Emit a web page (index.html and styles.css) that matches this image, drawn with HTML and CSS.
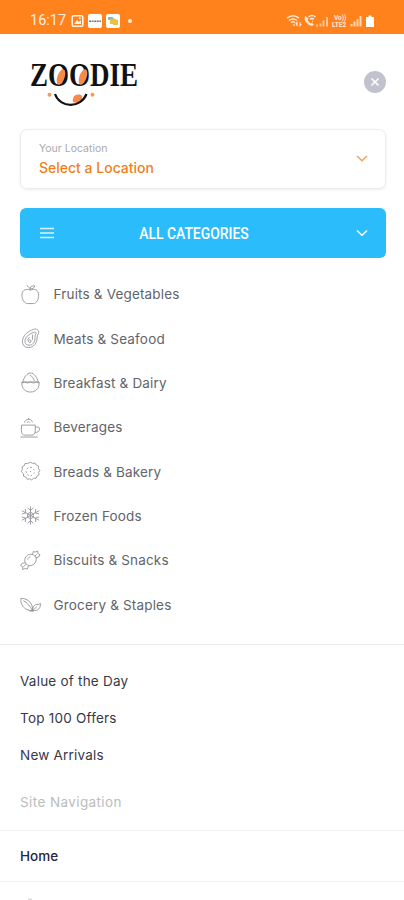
FILE: index.html
```html
<!DOCTYPE html>
<html lang="en">

<head>
    <meta charset="UTF-8">
    <meta name="viewport" content="width=device-width, initial-scale=1">
    <title>Zoodie</title>
    <link rel="stylesheet" href="styles.css">
</head>

<body>
    <div class="statusbar">
        <span class="time">16:17</span>
        <svg class="status-left" width="65" height="16" viewBox="0 0 65 16">
            <rect x="1.2" y="2.7" width="10.6" height="10.6" rx="1.5" fill="none" stroke="#fff3e6" stroke-width="1.6"/>
            <path d="M3 11l3-4 2 2 2-2v4z" fill="#fff3e6"/>
            <circle cx="8.8" cy="5.3" r="1" fill="#fff3e6"/>
            <rect x="17" y="1" width="14" height="14" rx="2" fill="#fff"/>
            <path d="M18 8.2h12" stroke="#777" stroke-width="1.6" stroke-dasharray="2 .6"/>
            <rect x="35" y="1" width="14" height="14" rx="2" fill="#fff"/>
            <path d="M37 4h5v3h-5z" fill="#8fb7b5"/>
            <path d="M39 6h3v5h-3zM42 5l5 2v5h-5z" fill="#efc239"/>
            <circle cx="59" cy="8" r="2" fill="#fff3e6"/>
        </svg>
        <svg class="status-right" width="92" height="16" viewBox="0 0 92 16" fill="none" stroke="#ffe9d6" stroke-width="1.5">
            <path d="M1 5.2q6-5 12 0M3 7.5q4-3.200 8 0M5 9.600q2-1.500 4 0"/>
            <path d="M7 11.500l2 1M11 13V9.500l-1.300 1.600M14 9v3.800l1.300-1.600" stroke-width="1.100"/>
            <path d="M19.500 3c-2 2-.5 5 1.500 7.200S26 13.600 28 12l-2.200-2.600-1.600 1-2.700-3.400 1-1.500z" fill="#ffe9d6" stroke="none"/>
            <path d="M22.500 4q3.500-3 7 0M24 6.300q2-1.700 4 0M26 8.500h1"/>
            <path d="M31 11.500v2M34.500 10.500v3M37.500 7.500v6M41 4v9.500" stroke-width="1.900" stroke="#ffc79a"/>
            <text class="volte" x="48" y="7">Vo))</text>
            <text class="volte" x="46" y="14">LTE2</text>
            <path d="M65.500 11v2.500M68.500 8.500v5M71.500 6v7.500M74.500 3v10.500" stroke-width="2" stroke="#ffd6b3"/>
            <path d="M80 4h2.500V2.500h3V4H88v10h-8z" fill="#fff" stroke="none"/>
        </svg>
    </div>

    <div class="header">
        <svg class="logo" width="116" height="54" viewBox="0 -4 116 54">
            <text class="logo-text" x="2" y="28" textLength="108" lengthAdjust="spacingAndGlyphs">ZOODIE</text>
            <ellipse cx="33" cy="19" rx="3.600" ry="8" transform="rotate(20 33 19)" fill="#f58a4b"/>
            <ellipse cx="55" cy="19" rx="3.600" ry="8" transform="rotate(20 55 19)" fill="#f58a4b"/>
            <circle cx="21.500" cy="36.700" r="2" fill="#f59a5c"/>
            <circle cx="64.500" cy="36.700" r="2" fill="#f59a5c"/>
            <path d="M45 44c-1-5 2-8 6-7.500 4 0 4 4 2 6-2 2-5 3-8 1.500z" fill="#f58a4b"/>
            <path d="M27 36c5 14.500 26 14.500 31.500 0" fill="none" stroke="#111" stroke-width="2.200"/>
        </svg>
        <button class="close" aria-label="Close">
            <svg width="22" height="22" viewBox="0 0 22 22">
                <path d="M7.500 7.500l7 7M14.500 7.500l-7 7" stroke="#fff" stroke-width="1.500"/>
            </svg>
        </button>
    </div>

    <div class="location">
        <div>
            <p class="location-label">Your Location</p>
            <p class="location-value">Select a Location</p>
        </div>
        <svg width="12" height="8" viewBox="0 0 12 8" fill="none" stroke="#f59a50" stroke-width="1.300">
            <path d="M1 1l5 4.800L11 1"/>
        </svg>
    </div>

    <div class="all-categories">
        <svg width="14" height="12" viewBox="0 0 14 12" stroke="#d9f4ff" stroke-width="1.300">
            <path d="M0 1.500h14M0 6h14M0 10.500h14"/>
        </svg>
        <span class="all-title">ALL CATEGORIES</span>
        <svg width="12" height="8" viewBox="0 0 12 8" fill="none" stroke="#fff" stroke-width="1.500">
            <path d="M1 1.500l5 4.800 5-4.800"/>
        </svg>
    </div>

    <ul class="categories">
        <li>
            <svg class="icon" viewBox="0 0 22 22">
                <path d="M11 6.500C7 4.500 2 6 2 11.500 2 16 4.500 20.500 8 20.500h6c3.500 0 5.500-4.500 5.500-9 0-5.500-4.500-7-8.500-5zM11 6.500C10 4 9 2.500 7 1.500M10.500 4.500c1-2.500 3-3 5-2.500-.5 2.500-3 3.500-5 2.500z"/>
            </svg>
            <span>Fruits &amp; Vegetables</span>
        </li>
        <li>
            <svg class="icon" viewBox="0 0 22 22">
                <path d="M14 1.500c3-1.500 6.500 1 5.500 4-.6 1.500-1.500 2-1.500 4 0 6-3.500 11-9 11-5 0-7.500-4-6-9C4.500 6.500 8.500 3.500 14 1.500z"/>
                <path d="M14.500 4.500c1.500-1 3 .5 2 2-1 1.500-.8 3-.8 4.500 0 4-2.700 7-6.200 7-3.500 0-5-2.500-4-6C6.500 8.500 10 6 14.500 4.500z"/>
                <path d="M13 7v5.500M10 9.500L7.500 13"/>
                <circle cx="10.200" cy="13.800" r="1.400"/>
            </svg>
            <span>Meats &amp; Seafood</span>
        </li>
        <li>
            <svg class="icon" viewBox="0 0 22 22">
                <path d="M3 10.500C4 5.500 7.500 1 11 1s7 4.500 8 9.500M10.500 3.500c2.500 1 4 3.500 4.500 6M2 10.500h18v2C20 17.500 16 21 11 21s-9-3.500-9-8.500zM2 11.500l3-1 3 1 3-1 3 1 3-1 3 1"/>
            </svg>
            <span>Breakfast &amp; Dairy</span>
        </li>
        <li>
            <svg class="icon" viewBox="0 0 22 22">
                <path d="M1.500 8.500h14.500v6c0 3-1.500 4.500-3.500 4.500H5c-2 0-3.500-1.500-3.500-4.500zM16 11c2-1 4.500-.5 4.500 1.800 0 2.500-2.500 3.700-5 3.200M.5 21h18M4.500 6c.5-2 2-3 4-3.500s4 .5 4.500 3M7.500 6c.5-1.500 2-1.500 3 0M9 2.500V1"/>
            </svg>
            <span>Beverages</span>
        </li>
        <li>
            <svg class="icon" viewBox="0 0 22 22">
                <path d="M11 1.200l2.200 1.300 2.500-.3 1.400 2.100 2.300 1-.1 2.500 1.500 2-1.200 2.200.3 2.500-2.100 1.400-1 2.300-2.500-.1-2 1.700-2.300-1.100-2.500.4-1.400-2.200-2.400-.9.100-2.500L1.300 11l1.200-2.200-.3-2.500 2.200-1.300.9-2.400 2.500.1z"/>
                <path d="M12.500 7c-3-1.500-6 1-6 4s3 5.500 6 4" stroke-dasharray="2 2"/>
                <path d="M14.500 8.500v1M14.800 12v1M11 10.500v1" stroke-dasharray="1 1"/>
            </svg>
            <span>Breads &amp; Bakery</span>
        </li>
        <li>
            <svg class="icon" viewBox="0 0 22 22">
                <path d="M11 1.500v19M2 6l18 10M20 6L2 16M8 3l3 2.500L14 3M8 19l3-2.500 3 2.500M2 9.500l4-1.300-.5-4M20 9.500l-4-1.300.5-4M2 12.500l4 1.300-.5 4M20 12.500l-4 1.300.5 4M11 7.500l3 1.800v3.500l-3 1.800-3-1.800V9.300z"/>
            </svg>
            <span>Frozen Foods</span>
        </li>
        <li>
            <svg class="icon" viewBox="0 0 22 22">
                <path d="M5 11c-.3-3.500 3-6.500 6.500-6.500 4 .5 6 3 5.500 6-.5 3.500-3.500 6-7 6-3-.5-5-2.500-5-5.500zM13 5l1-3.500 2 .7L18.500 1l.3 2.700L21 5l-1.600 2.500L16.500 8M5.500 13.500l-3 .2-2 2.500 2.200 1.300.2 3 2.700-1.200 2 .7 1.400-3.500M15.500 6.500l2-2M3.500 17.500l2.700-2.200M8 10c.3-1.600 1.300-2.500 3-2.800"/>
            </svg>
            <span>Biscuits &amp; Snacks</span>
        </li>
        <li>
            <svg class="icon" viewBox="0 0 22 22">
                <path d="M13 17.500C14 10.500 9 4.500 1 4.500c-1 7 4 13 12 13zM3.500 7c4 2 7.500 6 9.500 10.500M13 17.500c.3-4.500 2.500-6.500 4.500-6.500s3-.5 3.800-1.200C22 14.500 19 18 13 17.500zM13 17.500l4.500-4M8.500 16.500c1 1.500 4 1.800 6 1.200"/>
            </svg>
            <span>Grocery &amp; Staples</span>
        </li>
    </ul>

    <ul class="links">
        <li>Value of the Day</li>
        <li>Top 100 Offers</li>
        <li>New Arrivals</li>
    </ul>
    <p class="nav-title">Site Navigation</p>
    <ul class="nav">
        <li>Home</li>
        <li class="next-item"><i class="peek"></i></li>
    </ul>
</body>

</html>
```
FILE: styles.css
```css
* {
    margin: 0;
    padding: 0;
    box-sizing: border-box;
}

body {
    width: 404px;
    height: 900px;
    overflow: hidden;
    background-color: #fff;
    font-family: Inter, Roboto, sans-serif;
}

ul {
    list-style: none;
}

.statusbar {
    height: 34px;
    padding: 7px 26px 0 30px;
    display: flex;
    align-items: center;
    background-color: #ff821c;
}

.time {
    width: 41px;
    font: 14.5px Roboto, sans-serif;
    color: #fff0e2;
}

.status-right {
    margin-left: auto;
}

.volte {
    font: bold 6.5px Roboto, sans-serif;
    fill: #ffe9d6;
    stroke: none;
}

.header {
    height: 95px;
    padding: 20px 18px 0 28px;
    display: flex;
    justify-content: space-between;
    align-items: flex-start;
}

.logo-text {
    font: bold 33px "Liberation Serif", serif;
    fill: #111;
}

.close {
    width: 22px;
    height: 22px;
    margin-top: 17px;
    border: 0;
    border-radius: 50%;
    background-color: #c2c2cf;
}

.close svg {
    display: block;
}

.location {
    height: 60px;
    margin: 0 18px 0 20px;
    padding: 0 17px 0 18px;
    display: flex;
    justify-content: space-between;
    align-items: center;
    border: 1px solid #ececec;
    border-radius: 7px;
    box-shadow: 0 1px 3px rgba(0, 0, 0, .08);
}

.location-label {
    font-size: 10.5px;
    line-height: 17px;
    color: #aaa;
}

.location-value {
    font-size: 14px;
    font-weight: 500;
    line-height: 22px;
    color: #ef7f1a;
}

.all-categories {
    height: 50px;
    margin: 19px 18px 0 20px;
    padding: 0 18px 0 20px;
    display: flex;
    align-items: center;
    border-radius: 6px;
    background-color: #2bbdfb;
}

.all-title {
    margin: 0 auto 0 77px;
    font: 500 16px Roboto, sans-serif;
    color: #fff;
    transform: scaleX(.87);
}

.categories {
    padding: 14px 20px 0;
    height: 387px;
    border-bottom: 1px solid #ececec;
}

.categories li {
    height: 44.35px;
    display: flex;
    align-items: center;
    gap: 12.5px;
    font-size: 13.5px;
    letter-spacing: .17px;
    color: #62646b;
}

.icon {
    width: 21px;
    height: 21px;
    fill: none;
    stroke: #8e9096;
    stroke-width: .9;
    stroke-linejoin: round;
}

.links {
    padding: 18px 20px 0;
}

.links li {
    height: 37px;
    line-height: 37px;
    font-size: 13.5px;
    letter-spacing: .22px;
    color: #373947;
}

.nav-title {
    height: 56px;
    padding: 18px 20px 0;
    line-height: 20px;
    font-size: 13.5px;
    letter-spacing: .4px;
    color: #bcbcbc;
}

.nav li {
    height: 51px;
    padding: 0 20px;
    line-height: 51px;
    border-top: 1px solid #f3f3f3;
    font-size: 13.5px;
    font-weight: 500;
    color: #24253f;
}

.nav .next-item {
    padding: 16px 28px 0;
}

.peek {
    display: block;
    width: 4px;
    height: 2px;
    border-radius: 2px 2px 0 0;
    background-color: #ddd;
}
```
